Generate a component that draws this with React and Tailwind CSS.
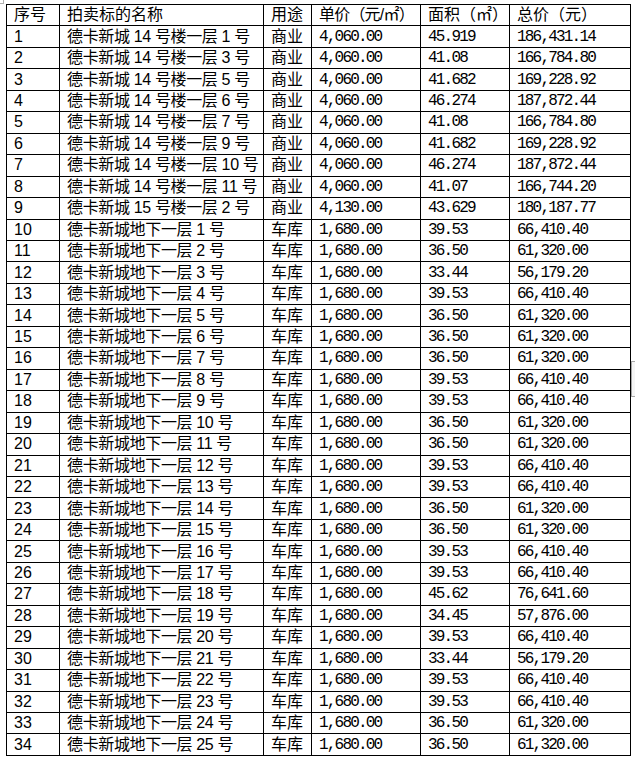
import React from "react";

const shop = (n) => `德卡新城 14 号楼一层 ${n} 号`;
const garage = (n) => `德卡新城地下一层 ${n} 号`;

const rows = [
  [shop(1), "商业", "4,060.00", "45.919", "186,431.14"],
  [shop(3), "商业", "4,060.00", "41.08", "166,784.80"],
  [shop(5), "商业", "4,060.00", "41.682", "169,228.92"],
  [shop(6), "商业", "4,060.00", "46.274", "187,872.44"],
  [shop(7), "商业", "4,060.00", "41.08", "166,784.80"],
  [shop(9), "商业", "4,060.00", "41.682", "169,228.92"],
  [shop(10), "商业", "4,060.00", "46.274", "187,872.44"],
  [shop(11), "商业", "4,060.00", "41.07", "166,744.20"],
  ["德卡新城 15 号楼一层 2 号", "商业", "4,130.00", "43.629", "180,187.77"],
  [garage(1), "车库", "1,680.00", "39.53", "66,410.40"],
  [garage(2), "车库", "1,680.00", "36.50", "61,320.00"],
  [garage(3), "车库", "1,680.00", "33.44", "56,179.20"],
  [garage(4), "车库", "1,680.00", "39.53", "66,410.40"],
  [garage(5), "车库", "1,680.00", "36.50", "61,320.00"],
  [garage(6), "车库", "1,680.00", "36.50", "61,320.00"],
  [garage(7), "车库", "1,680.00", "36.50", "61,320.00"],
  [garage(8), "车库", "1,680.00", "39.53", "66,410.40"],
  [garage(9), "车库", "1,680.00", "39.53", "66,410.40"],
  [garage(10), "车库", "1,680.00", "36.50", "61,320.00"],
  [garage(11), "车库", "1,680.00", "36.50", "61,320.00"],
  [garage(12), "车库", "1,680.00", "39.53", "66,410.40"],
  [garage(13), "车库", "1,680.00", "39.53", "66,410.40"],
  [garage(14), "车库", "1,680.00", "36.50", "61,320.00"],
  [garage(15), "车库", "1,680.00", "36.50", "61,320.00"],
  [garage(16), "车库", "1,680.00", "39.53", "66,410.40"],
  [garage(17), "车库", "1,680.00", "39.53", "66,410.40"],
  [garage(18), "车库", "1,680.00", "45.62", "76,641.60"],
  [garage(19), "车库", "1,680.00", "34.45", "57,876.00"],
  [garage(20), "车库", "1,680.00", "39.53", "66,410.40"],
  [garage(21), "车库", "1,680.00", "33.44", "56,179.20"],
  [garage(22), "车库", "1,680.00", "39.53", "66,410.40"],
  [garage(23), "车库", "1,680.00", "39.53", "66,410.40"],
  [garage(24), "车库", "1,680.00", "36.50", "61,320.00"],
  [garage(25), "车库", "1,680.00", "36.50", "61,320.00"],
];

const sans = "font-['Liberation_Sans','Noto_Sans_CJK_SC',sans-serif]";
const mono = "font-['Liberation_Mono','Noto_Sans_CJK_SC',monospace] tracking-[-1.8px]";
const cell = "border border-black px-[7px] py-0 h-[21.457px] leading-[20px] whitespace-nowrap text-left align-middle";

const App = () => {
  return (
    <div className="relative w-[635px] h-[759px] bg-white pt-[4px] pl-[6px] text-black text-[16px]">
      {/* stray marks from the capture */}
      <div className="absolute left-0 top-0 w-[4px] h-[4px] border-r border-b border-[#b0b0b0]" />
      <div className="absolute left-[631px] top-[361px] w-[4px] h-[36px] bg-[#f5f5f5] border-l border-t border-b border-[#a8a8a8]" />

      <table className={`border-collapse table-fixed w-[624px] ${sans}`}>
        <colgroup>
          <col className="w-[53px]" />
          <col className="w-[204px]" />
          <col className="w-[48px]" />
          <col className="w-[109px]" />
          <col className="w-[89px]" />
          <col className="w-[121px]" />
        </colgroup>
        <thead>
          <tr>
            <th className={`${cell} font-normal`}>序号</th>
            <th className={`${cell} font-normal`}>拍卖标的名称</th>
            <th className={`${cell} font-normal`}>用途</th>
            <th className={`${cell} font-normal tracking-[-0.8px]`}>单价（元/㎡）</th>
            <th className={`${cell} font-normal`}>面积（㎡）</th>
            <th className={`${cell} font-normal`}>总价（元）</th>
          </tr>
        </thead>
        <tbody>
          {rows.map((r, i) => (
            <tr key={i}>
              <td className={cell}>{i + 1}</td>
              <td className={`${cell} tracking-[-0.35px]`}>{r[0]}</td>
              <td className={cell}>{r[1]}</td>
              <td className={`${cell} ${mono}`}>{r[2]}</td>
              <td className={`${cell} ${mono}`}>{r[3]}</td>
              <td className={`${cell} ${mono}`}>{r[4]}</td>
            </tr>
          ))}
        </tbody>
      </table>
    </div>
  );
};

export default App;
